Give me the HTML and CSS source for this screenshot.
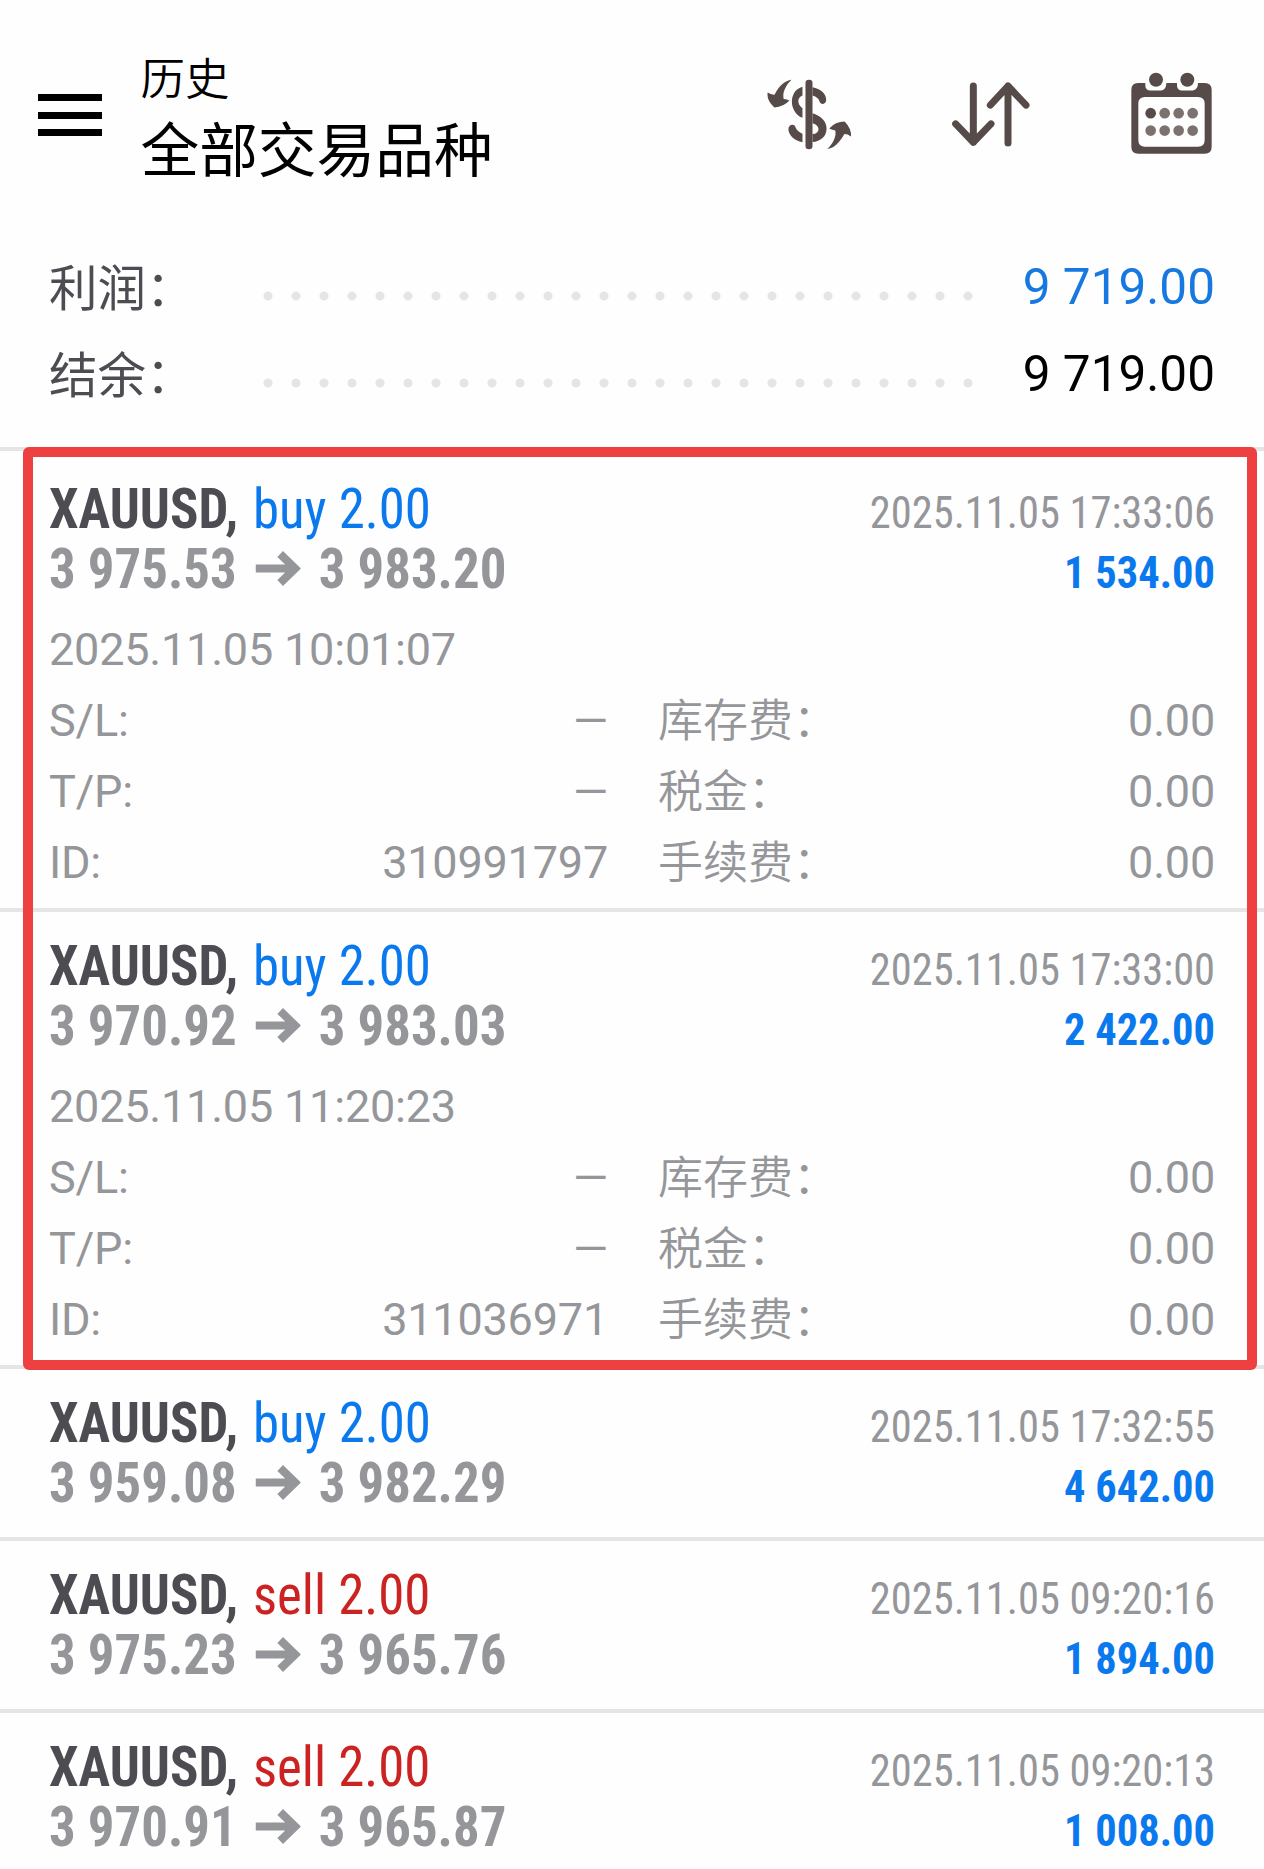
FILE: index.html
```
<!DOCTYPE html>
<html lang="zh-CN">
<head>
<meta charset="utf-8">
<title>历史</title>
<link rel="stylesheet" href="styles.css">
</head>
<body>
<header class="topbar">
  <div class="menu"><i></i><i></i><i></i></div>
  <div class="titles">
    <div class="sub">历史</div>
    <div class="title">全部交易品种</div>
  </div>
  <nav class="tools">
    <svg class="i-money" viewBox="80 88 254 214" preserveAspectRatio="none" fill="#574b49">
      <path d="M153 90C134 92 115 109 103 135Q92 136 82 129Q78 153 102 174Q130 172 147 153Q144 150 130 148C125 130 135 108 153 90Z"/>
      <path d="M260 299C278 298 297 281 311 254Q321 254 331 261Q333 238 312 216Q284 216 266 237Q271 240 284 243C288 260 278 282 260 299Z"/>
      <rect x="195" y="90" width="21" height="210" rx="10"/>
      <path d="M186 111V138C170 144 169 164 186 176V205C144 187 144 122 186 111Z"/>
      <path d="M216 113C240 117 257 132 257 152C255 166 240 167 237 156Q234 144 216 138Z"/>
      <path fill-rule="evenodd" d="M216 191C238 198 258 212 258 237C258 261 240 276 216 278ZM216 221V254C240 252 240 228 216 221Z"/>
      <path d="M144 240C143 222 165 221 166 236Q170 246 186 253V279C163 273 146 260 144 240Z"/>
    </svg>
    <svg class="i-sort" viewBox="635 98 234 194" preserveAspectRatio="none" fill="none" stroke="#574b49" stroke-width="21" stroke-linecap="round" stroke-linejoin="round">
      <path d="M699 110V278M646 223L699 278L752 223M803 280V110M750 167L803 110L857 167"/>
    </svg>
    <svg class="i-cal" viewBox="1169 67 243 245" preserveAspectRatio="none" fill="#574b49">
      <path fill-rule="evenodd" d="M1190 100H1212V108Q1213 122 1227 122H1260Q1275 120 1275 100H1307V108Q1308 122 1322 122H1354Q1370 120 1370 100H1390Q1411 100 1411 121V290Q1411 311 1390 311H1191Q1170 311 1170 290V121Q1170 100 1190 100ZM1211 142Q1191 142 1191 162V270Q1191 290 1211 290H1370Q1390 290 1390 270V162Q1390 142 1370 142Z"/>
      <circle cx="1244" cy="90" r="21"/><circle cx="1338" cy="90" r="21"/>
      <circle cx="1228" cy="190" r="16"/>
      <g fill="#7b726f"><circle cx="1270" cy="190" r="16"/><circle cx="1312" cy="190" r="16"/><circle cx="1354" cy="190" r="16"/><circle cx="1228" cy="242" r="16"/><circle cx="1270" cy="242" r="16"/><circle cx="1312" cy="242" r="16"/><circle cx="1354" cy="242" r="16"/></g>
    </svg>
  </nav>
</header>

<section class="summary">
  <div class="sum"><span class="label">利润：</span><span class="dots"></span><span class="amount blue">9 719.00</span></div>
  <div class="sum"><span class="label">结余：</span><span class="dots"></span><span class="amount">9 719.00</span></div>
</section>

<main class="deals">
  <div class="marked">
    <article class="deal">
      <div class="line"><span class="cond symbol"><b>XAUUSD,</b> <span class="buy">buy 2.00</span></span><span class="cond time">2025.11.05 17:33:06</span></div>
      <div class="line"><span class="cond prices"><span>3 975.53</span><svg class="arrow" viewBox="0 0 45 42" preserveAspectRatio="none"><path d="M0 20.5H39M24.5 6L39.5 20.5L24.5 35"/></svg><span>3 983.20</span></span><span class="cond profit">1 534.00</span></div>
      <div class="details">
        <div class="row"><span class="opened">2025.11.05 10:01:07</span></div>
        <div class="row"><span class="left"><span>S/L:</span><span class="dash">—</span></span><span class="right"><span class="cjk">库存费：</span><span>0.00</span></span></div>
        <div class="row"><span class="left"><span>T/P:</span><span class="dash">—</span></span><span class="right"><span class="cjk">税金：</span><span>0.00</span></span></div>
        <div class="row"><span class="left"><span>ID:</span><span>310991797</span></span><span class="right"><span class="cjk">手续费：</span><span>0.00</span></span></div>
      </div>
    </article>
    <article class="deal">
      <div class="line"><span class="cond symbol"><b>XAUUSD,</b> <span class="buy">buy 2.00</span></span><span class="cond time">2025.11.05 17:33:00</span></div>
      <div class="line"><span class="cond prices"><span>3 970.92</span><svg class="arrow" viewBox="0 0 45 42" preserveAspectRatio="none"><path d="M0 20.5H39M24.5 6L39.5 20.5L24.5 35"/></svg><span>3 983.03</span></span><span class="cond profit">2 422.00</span></div>
      <div class="details">
        <div class="row"><span class="opened">2025.11.05 11:20:23</span></div>
        <div class="row"><span class="left"><span>S/L:</span><span class="dash">—</span></span><span class="right"><span class="cjk">库存费：</span><span>0.00</span></span></div>
        <div class="row"><span class="left"><span>T/P:</span><span class="dash">—</span></span><span class="right"><span class="cjk">税金：</span><span>0.00</span></span></div>
        <div class="row"><span class="left"><span>ID:</span><span>311036971</span></span><span class="right"><span class="cjk">手续费：</span><span>0.00</span></span></div>
      </div>
    </article>
    <div class="frame"></div>
  </div>
  <article class="deal">
    <div class="line"><span class="cond symbol"><b>XAUUSD,</b> <span class="buy">buy 2.00</span></span><span class="cond time">2025.11.05 17:32:55</span></div>
    <div class="line"><span class="cond prices"><span>3 959.08</span><svg class="arrow" viewBox="0 0 45 42" preserveAspectRatio="none"><path d="M0 20.5H39M24.5 6L39.5 20.5L24.5 35"/></svg><span>3 982.29</span></span><span class="cond profit">4 642.00</span></div>
  </article>
  <article class="deal">
    <div class="line"><span class="cond symbol"><b>XAUUSD,</b> <span class="sell">sell 2.00</span></span><span class="cond time">2025.11.05 09:20:16</span></div>
    <div class="line"><span class="cond prices"><span>3 975.23</span><svg class="arrow" viewBox="0 0 45 42" preserveAspectRatio="none"><path d="M0 20.5H39M24.5 6L39.5 20.5L24.5 35"/></svg><span>3 965.76</span></span><span class="cond profit">1 894.00</span></div>
  </article>
  <article class="deal">
    <div class="line"><span class="cond symbol"><b>XAUUSD,</b> <span class="sell">sell 2.00</span></span><span class="cond time">2025.11.05 09:20:13</span></div>
    <div class="line"><span class="cond prices"><span>3 970.91</span><svg class="arrow" viewBox="0 0 45 42" preserveAspectRatio="none"><path d="M0 20.5H39M24.5 6L39.5 20.5L24.5 35"/></svg><span>3 965.87</span></span><span class="cond profit">1 008.00</span></div>
  </article>
</main>
</body>
</html>
```
FILE: styles.css
```
* { box-sizing: border-box; }
body {
  margin: 0;
  height: 1869px;
  overflow: hidden;
  background: #fefefe;
  font-family: Roboto, "Noto Sans CJK SC", sans-serif;
  color: #95969a;
}
.topbar { display: flex; height: 244px; padding-left: 38px; }
.menu { display: flex; flex-direction: column; gap: 10.5px; width: 64px; padding-top: 94px; }
.menu i { height: 7px; background: #000; }
.titles { margin-left: 38.5px; padding-top: 48px; color: #000; white-space: nowrap; }
.sub { font-size: 44.5px; font-weight: 350; line-height: 64px; height: 64px; }
.title { font-size: 58.7px; line-height: 80px; height: 80px; }
.tools { margin-left: auto; width: 497px; display: flex; align-items: flex-start; }
.tools svg { display: block; flex: none; }
.i-money { width: 85px; height: 71px; margin-top: 79px; }
.i-sort { width: 78px; height: 65px; margin: 82px 0 0 100px; }
.i-cal { width: 81px; height: 82px; margin: 72px 0 0 101px; }

.summary { height: 207px; padding: 0 49px; border-bottom: 4px solid #e5e5e5; }
.sum { display: flex; height: 87px; line-height: 87px; font-size: 48.5px; }
.label { width: 205px; padding-top: 2px; color: #4c4c52; font-weight: 400; }
.dots {
  width: 728px;
  height: 28px;
  margin-top: 37.5px;
  background: radial-gradient(circle, #e5e5e5 4px, transparent 5px) 0 0 / 28px 28px;
}
.amount { margin-left: auto; color: #000; font-size: 49.5px; white-space: nowrap; }
.amount.blue { color: #1778e0; }

.deals { padding-top: 4px; }
.marked { position: relative; }
.frame {
  position: absolute;
  left: 23px; right: 7px; top: -8px; bottom: -1px;
  border: 10px solid #ee4040;
  border-radius: 6px;
}
.deal { padding: 24px 49px; border-bottom: 4px solid #e5e5e5; }
.deal:has(.details) { padding-bottom: 10px; }
.line { display: flex; justify-content: space-between; align-items: baseline; height: 60px; line-height: 60px; font-size: 56px; white-space: nowrap; }

/* Numbers are set narrower than the condensed cut itself. */
.cond { font-family: "Roboto Condensed", Roboto, sans-serif; font-stretch: 75%; transform: scaleX(.943); transform-origin: left; }
.time, .profit { font-size: 45px; transform-origin: right; }
.symbol b { color: #4c4c52; font-weight: 700; }
.buy, .sell { margin-left: 3px; }
.buy { color: #0b79ee; }
.sell { color: #cb2222; }
.prices { display: flex; align-items: baseline; font-weight: 700; }
.arrow { width: 48px; height: 42px; margin: 0 19px 0 20px; position: relative; top: 2px; fill: none; stroke: #95969a; stroke-width: 8; }
.profit { font-weight: 700; color: #0b79ee; }

.details { margin-top: 15px; font-size: 45px; line-height: 71px; letter-spacing: -.2px; }
.row { display: flex; height: 71px; white-space: nowrap; }
.cjk { font-weight: 350; padding-top: 1px; letter-spacing: 0; }
.left { display: flex; justify-content: space-between; width: 559px; }
.right { display: flex; justify-content: space-between; flex: 1; margin-left: 50px; }
```
